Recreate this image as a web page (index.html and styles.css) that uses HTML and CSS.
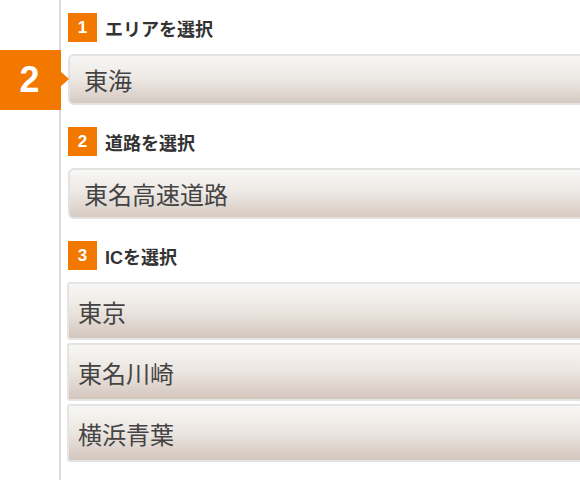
FILE: index.html
```html
<!DOCTYPE html>
<html lang="ja">

<head>
  <meta charset="UTF-8">
  <meta name="viewport" content="width=device-width, initial-scale=1.0">
  <title>IC選択</title>

  <link rel="stylesheet" href="styles.css">
</head>

<body>
  <div class="page">
    <div class="side">
      <div class="step-mark">2</div>
    </div>

    <div class="main">
      <div class="section">
        <h2 class="sec-title"><span class="num">1</span>エリアを選択</h2>
        <a class="choice" href="javascript:">東海</a>
      </div>

      <div class="section">
        <h2 class="sec-title"><span class="num">2</span>道路を選択</h2>
        <a class="choice" href="javascript:">東名高速道路</a>
      </div>

      <div class="section">
        <h2 class="sec-title"><span class="num">3</span>ICを選択</h2>
        <ul class="ic-list">
          <li><a href="javascript:">東京</a></li>
          <li><a href="javascript:">東名川崎</a></li>
          <li><a href="javascript:">横浜青葉</a></li>
        </ul>
      </div>
    </div>
  </div>
</body>

</html>
```

FILE: styles.css
```css
* {
  padding: 0;
  margin: 0;
  list-style: none;
  box-sizing: border-box;
}

body {
  background: #fff;
  font-family: "Liberation Sans", "Noto Sans CJK JP", sans-serif;
  color: #333;
}

a {
  text-decoration: none;
  color: inherit;
}

.page {
  display: flex;
  min-height: 480px;
  overflow: hidden;
}

.side {
  width: 61px;
  flex-shrink: 0;
  border-right: 2px solid #dcdcdc;
  position: relative;
}

/* 現在のステップ */
.step-mark {
  position: absolute;
  left: 0;
  top: 50px;
  width: 61px;
  height: 60px;
  background-color: #f27800;
  color: #fff;
  font-size: 36px;
  font-weight: bold;
  line-height: 60px;
  text-align: center;
  padding-right: 2px;
}

.step-mark::after {
  content: "";
  position: absolute;
  left: 60px;
  top: 21px;
  border-style: solid;
  border-width: 8px 0 8px 9px;
  border-color: transparent transparent transparent #f27800;
}

.main {
  flex: 1;
  padding: 13px 0 0 7px;
  margin-right: -20px;
}

.section {
  margin-bottom: 22px;
}

.sec-title {
  display: flex;
  align-items: center;
  gap: 8px;
  height: 29px;
  margin-bottom: 12px;
  font-size: 18px;
  font-weight: bold;
  color: #333;
}

.sec-title .num {
  width: 29px;
  height: 29px;
  background-color: #f27800;
  color: #fff;
  font-size: 17px;
  text-align: center;
  line-height: 29px;
}

.choice {
  display: flex;
  align-items: center;
  height: 51px;
  padding-left: 14px;
  font-size: 24px;
  color: #444;
  border: 2px solid #e2e2e2;
  border-radius: 6px;
  background: linear-gradient(#f8f7f5, #ece7e3 50%, #d6cac1);
}

.ic-list {
  margin: 1px 0 0 -1px;
}

.ic-list li a {
  display: flex;
  align-items: center;
  height: 58px;
  margin-bottom: 3px;
  padding-left: 9px;
  font-size: 24px;
  color: #444;
  border: 2px solid #e4e4e4;
  border-radius: 3px;
  background: linear-gradient(#f8f7f5, #ebe5e0 50%, #d3c6bd);
}
```
